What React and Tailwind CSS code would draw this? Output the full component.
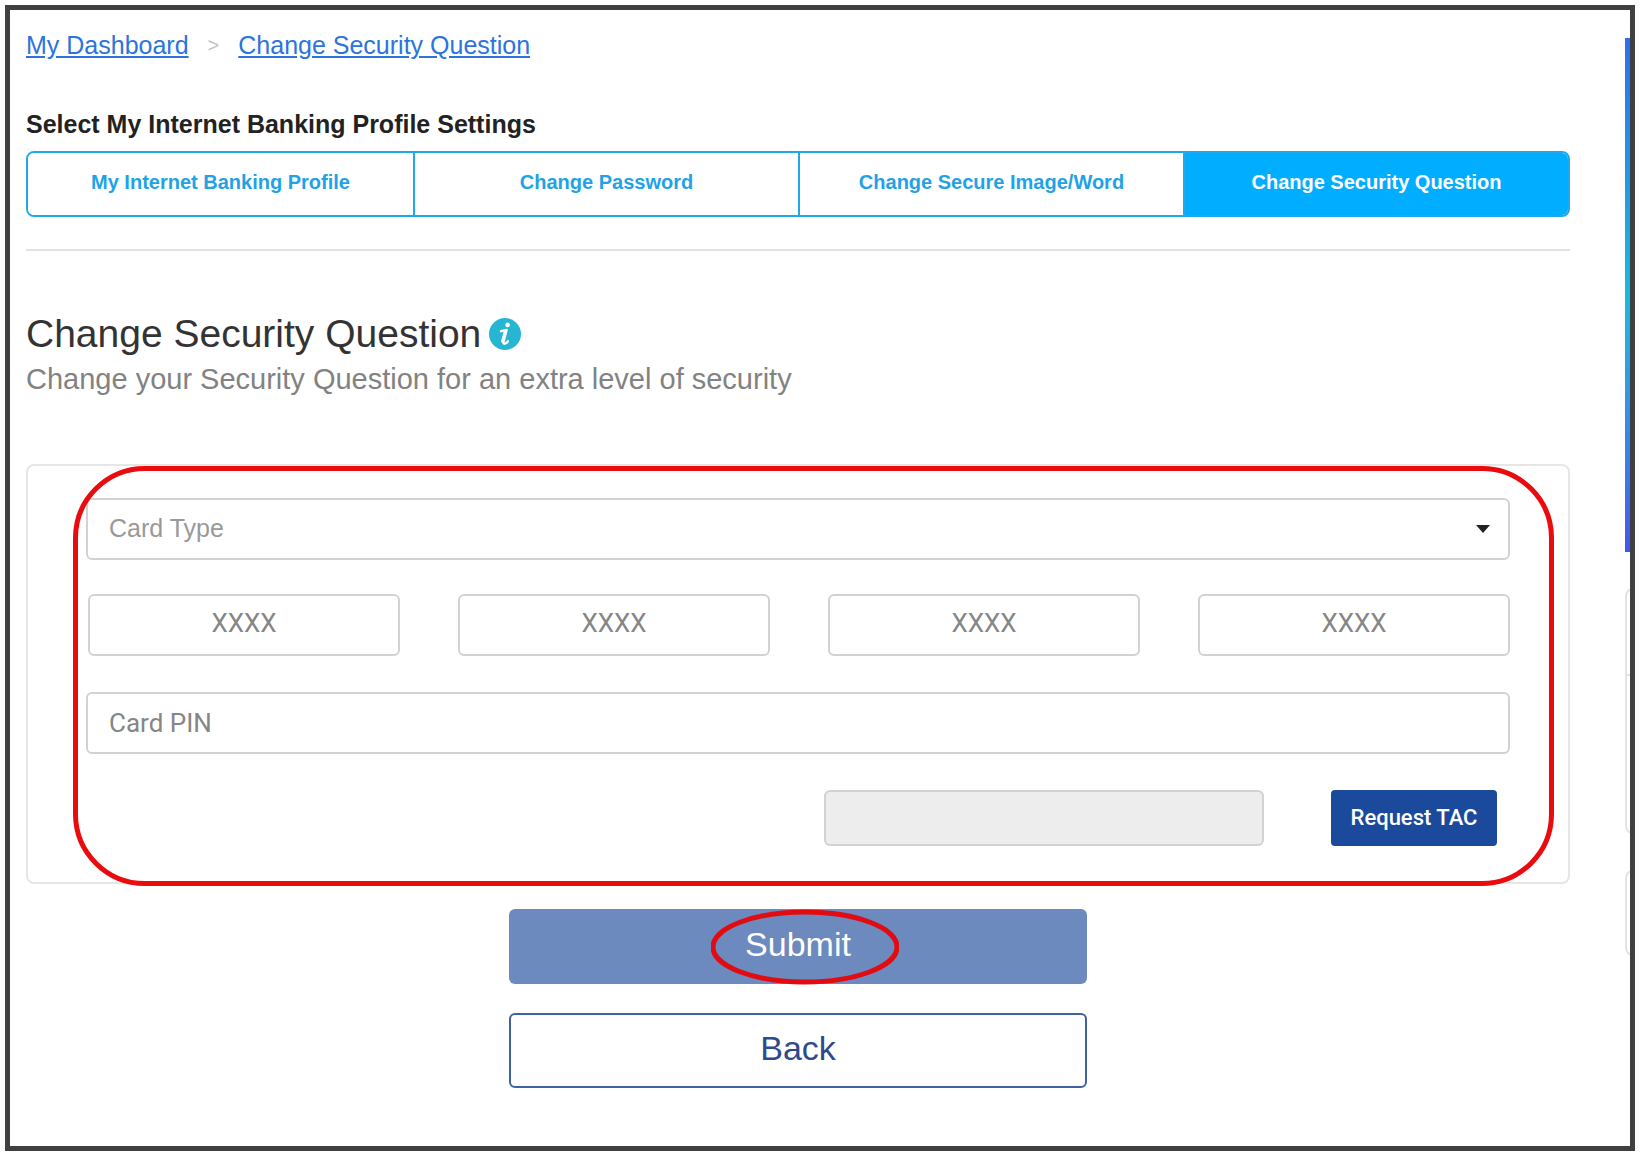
import { useState } from 'react';

const tabs = [
  'My Internet Banking Profile',
  'Change Password',
  'Change Secure Image/Word',
  'Change Security Question',
];

const cardParts = [1, 2, 3, 4];

const fieldClass =
  'h-[62px] w-full rounded-md border-2 border-[#d2d2d2] bg-white placeholder:text-[#868686] placeholder:opacity-100 outline-none';

function InfoIcon() {
  return (
    <svg viewBox="0 0 32 32" className="size-8 flex-none" aria-hidden="true">
      <circle cx="16" cy="16" r="16" fill="#26b5d3" />
      <circle cx="18.6" cy="6.9" r="2.3" fill="#fff" />
      <path
        d="M12 13.2l5.6-1.2-3.1 11.6c-.4 1.7.4 2.5 1.8 1.9 1-.4 1.9-1.3 2.6-2.3"
        fill="none"
        stroke="#fff"
        strokeWidth="2.4"
        strokeLinecap="round"
        strokeLinejoin="round"
      />
      <path d="M16.2 13.4l-2.6 9.8" stroke="#fff" strokeWidth="3" strokeLinecap="round" />
    </svg>
  );
}

export default function App() {
  const [active, setActive] = useState('Change Security Question');

  return (
    <div className="flex min-h-screen bg-white pt-[5px] pr-[7px] pb-1 pl-[5px] font-['Liberation_Sans',Arial,sans-serif]">
      <div className="flex flex-1 border-5 border-[#404040]">
        <main className="flex-1 pt-[17px] pr-[55px] pl-4">
          {/* Breadcrumb */}
          <nav className="flex items-center gap-[19px] text-[25px] leading-9 text-[#2b74dd]">
            <a href="#dashboard" className="underline">My Dashboard</a>
            <span className="text-xl text-[#c4c4c4]">&gt;</span>
            <a href="#security-question" className="underline">Change Security Question</a>
          </nav>

          {/* Profile settings tabs */}
          <h2 className="mt-[43px] text-[25px] leading-9 font-bold text-[#222]">
            Select My Internet Banking Profile Settings
          </h2>
          <div className="mt-[9px] grid grid-cols-4 overflow-hidden rounded-lg border-2 border-[#1fa9ea]">
            {tabs.map((tab) => (
              <button
                key={tab}
                onClick={() => setActive(tab)}
                className={`h-[62px] border-l-2 border-[#1fa9ea] pb-1 text-xl font-bold first:border-l-0 ${
                  active === tab ? 'bg-[#00adff] text-white' : 'bg-white text-[#1fa3e6]'
                }`}
              >
                {tab}
              </button>
            ))}
          </div>
          <hr className="mt-8 border-t-2 border-[#e3e3e3]" />

          {/* Page title */}
          <div className="mt-[58px] flex items-center gap-2">
            <h1 className="text-[39px] leading-[50px] text-[#333]">Change Security Question</h1>
            <InfoIcon />
          </div>
          <p className="text-[29px] leading-10 text-[#828282]">
            Change your Security Question for an extra level of security
          </p>

          {/* Card details */}
          <section className="relative mt-[65px] rounded-lg border-2 border-[#e6e6e6] px-[58px] pt-8 pb-9 text-[26px] text-[#868686]">
            <div className="relative">
              <select
                aria-label="Card Type"
                defaultValue=""
                className={`${fieldClass} appearance-none px-[21px] text-[25px] text-[#999]`}
              >
                <option value="">Card Type</option>
                <option value="debit">Debit Card</option>
                <option value="credit">Credit Card</option>
              </select>
              <svg viewBox="0 0 14 8" className="pointer-events-none absolute top-[27px] right-5 h-2 w-3.5">
                <path d="M0 0h14L7 8z" fill="#222" />
              </svg>
            </div>

            <div className="mt-[34px] grid grid-cols-4 gap-[58px] pl-0.5 font-[Roboto,sans-serif]">
              {cardParts.map((part) => (
                <input
                  key={part}
                  aria-label={`Card number part ${part}`}
                  placeholder="XXXX"
                  maxLength={4}
                  className={`${fieldClass} pb-1 text-center`}
                />
              ))}
            </div>

            <input
              type="password"
              aria-label="Card PIN"
              placeholder="Card PIN"
              className={`${fieldClass} mt-9 px-[21px] font-[Roboto,sans-serif]`}
            />

            <div className="mt-9 flex justify-end gap-[67px] pr-[13px]">
              <input
                disabled
                aria-label="TAC"
                className="h-14 w-[440px] rounded-md border-2 border-[#d2d2d2] bg-[#ededed]"
              />
              <button className="h-14 w-[166px] rounded-sm bg-[#1b499b] pb-0.5 font-[Roboto,sans-serif] text-[22px] font-medium text-white">
                Request TAC
              </button>
            </div>

            {/* Highlight around the fields */}
            <div className="pointer-events-none absolute top-0 right-3.5 -bottom-1 left-[45px] rounded-[72px] border-5 border-[#e90b0d]" />
          </section>

          {/* Actions */}
          <div className="mx-auto mt-[25px] flex w-[578px] flex-col gap-[29px]">
            <button className="relative h-[75px] rounded-md bg-[#6c8abd] pb-1 text-[34px] text-white">
              Submit
              <svg
                viewBox="0 0 188 76"
                className="pointer-events-none absolute top-0 left-[202px] h-[76px] w-[188px]"
                aria-hidden="true"
              >
                <ellipse cx="94" cy="38" rx="92" ry="35" fill="none" stroke="#e30b12" strokeWidth="5" />
              </svg>
            </button>
            <button className="h-[75px] rounded-md border-2 border-[#3f62a0] bg-white pb-1 text-[34px] text-[#2d4a8c]">
              Back
            </button>
          </div>
        </main>

        {/* Side column, cut off by the frame */}
        <aside className="w-[5px] flex-none overflow-hidden pt-7">
          <div className="h-[514px] bg-linear-to-b from-[#2f6df0] via-[#16bbdc] to-[#4654f0]" />
          <div className="mt-9 h-[246px] w-64 rounded-lg border-2 border-[#e3e3e3]">
            <div className="h-[86px] border-b-2 border-[#e3e3e3]" />
          </div>
          <div className="mt-9 h-[86px] w-64 rounded-lg border-2 border-[#e3e3e3]" />
        </aside>
      </div>
    </div>
  );
}
